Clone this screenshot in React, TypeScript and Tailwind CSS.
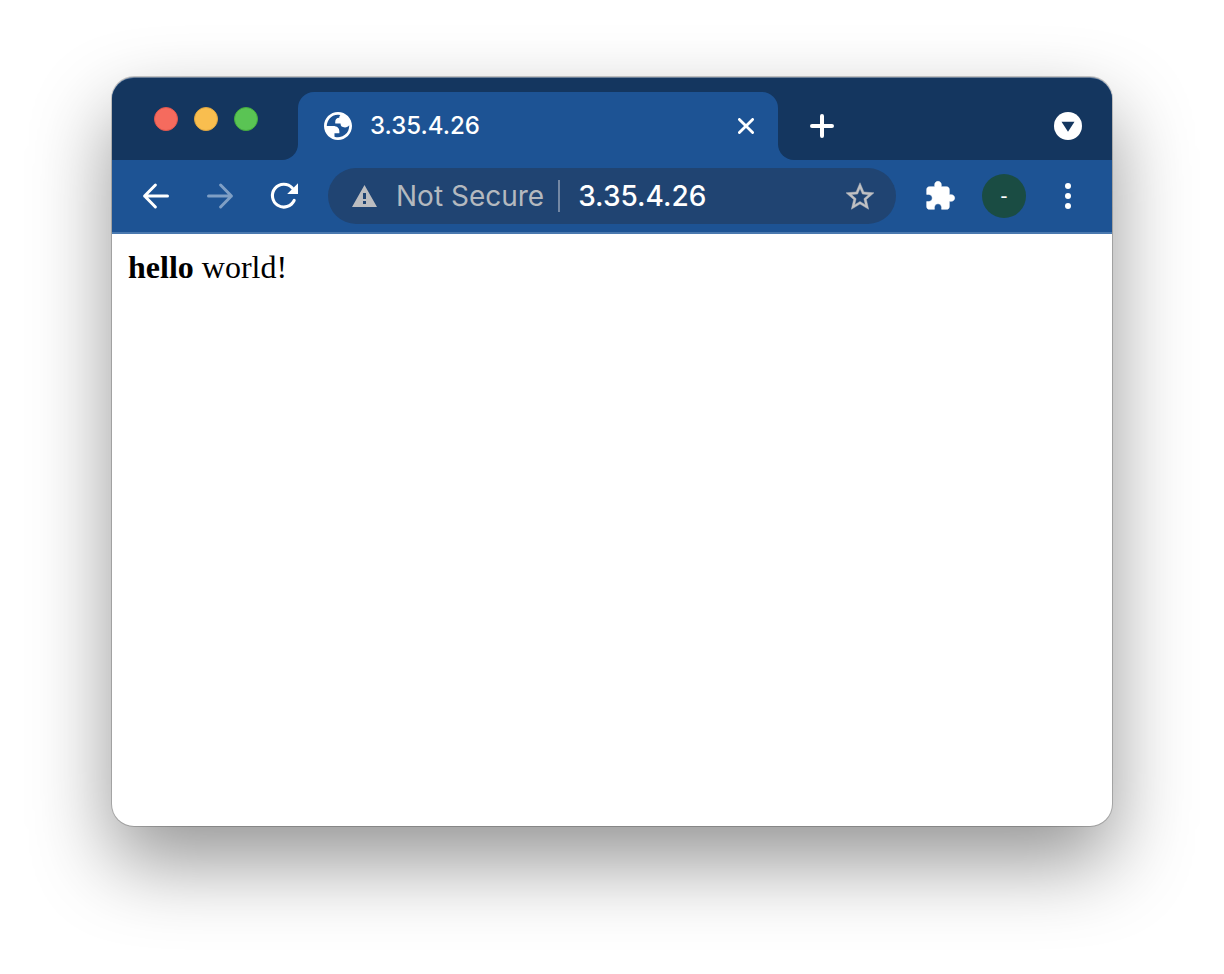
const iconButton = "flex h-14 w-16 shrink-0 items-center justify-center";

function GlobeIcon() {
  return (
    <svg viewBox="2 2 20 20" className="h-7 w-7 shrink-0" fill="#fff" aria-hidden="true">
      <path fillRule="evenodd" d="M12 2C6.480 2 2 6.480 2 12s4.480 10 10 10 10-4.480 10-10S17.520 2 12 2zM4 12h4.400c3.407.022 4.922 1.730 4.543 5.127H9.488v2.470a8.004 8.004 0 0 0 10.498-8.083C19.327 12.504 18.332 13 17 13c-2.137 0-3.206-.916-3.206-2.750h-3.748c-.274-2.728.683-4.092 2.870-4.092 0-.975.327-1.597.811-1.970A8.004 8.004 0 0 0 4 12z" />
    </svg>
  );
}

function TabStrip() {
  return (
    <div className="flex h-[82px] bg-[#1d5394]">
      <div className="flex w-[186px] shrink-0 items-center gap-4 rounded-br-2xl bg-[#14365f] pl-[42px]">
        <button aria-label="Close window" className="h-6 w-6 rounded-full border border-[#e2564c] bg-[#f56b5e]" />
        <button aria-label="Minimize window" className="h-6 w-6 rounded-full border border-[#e0a63f] bg-[#f9be4f]" />
        <button aria-label="Zoom window" className="h-6 w-6 rounded-full border border-[#45ac3e] bg-[#5ac454]" />
      </div>
      <div className="w-[480px] min-w-0 shrink bg-[#14365f] pt-[14px]">
        <div className="flex h-full items-center rounded-t-2xl bg-[#1d5394] pr-5 pl-[26px]">
          <GlobeIcon />
          <span className="ml-[18px] flex-1 truncate text-2xl font-medium text-white">3.35.4.26</span>
          <button aria-label="Close tab" className="flex h-6 w-6 items-center justify-center">
            <svg viewBox="0 0 16 16" className="h-4 w-4" fill="none" stroke="#fff" strokeWidth="2.8" strokeLinecap="round">
              <path d="M1.400 1.400l13.200 13.200M14.600 1.400L1.400 14.600" />
            </svg>
          </button>
        </div>
      </div>
      <div className="flex flex-1 items-center justify-between rounded-bl-2xl bg-[#14365f] pt-[14px] pr-[30px] pl-8">
        <button aria-label="New tab" className="flex h-6 w-6 items-center justify-center">
          <svg viewBox="0 0 24 24" className="h-6 w-6" fill="none" stroke="#fff" strokeWidth="4" strokeLinecap="round">
            <path d="M12 2v20M2 12h20" />
          </svg>
        </button>
        <button aria-label="Search tabs" className="h-7 w-7">
          <svg viewBox="0 0 28 28" className="h-7 w-7">
            <circle cx="14" cy="14" r="14" fill="#fff" />
            <path d="M7.500 9.800h13l-6.500 9.900z" fill="#14365f" />
          </svg>
        </button>
      </div>
    </div>
  );
}

function Toolbar() {
  return (
    <div className="flex h-[74px] items-center border-b-2 border-[#4a79af] bg-[#1d5394] px-3">
      <button aria-label="Back" className={iconButton}>
        <svg viewBox="0 0 28 28" className="h-7 w-7" fill="none" stroke="#fff" strokeWidth="3" strokeLinecap="round" strokeLinejoin="round">
          <path d="M25.500 14H2.600M13.400 3L2.600 14l10.800 11" />
        </svg>
      </button>
      <button aria-label="Forward" className={iconButton}>
        <svg viewBox="0 0 28 28" className="h-7 w-7" fill="none" stroke="#7f9fc5" strokeWidth="3" strokeLinecap="round" strokeLinejoin="round">
          <path d="M2.500 14h22.900M14.600 3l10.800 11-10.800 11" />
        </svg>
      </button>
      <button aria-label="Reload" className={iconButton}>
        <svg viewBox="0 0 28 28" className="h-7 w-7">
          <path d="M24.200 18.400A11.400 11.400 0 1 1 22.300 6" fill="none" stroke="#fff" strokeWidth="3.100" strokeLinecap="round" />
          <path d="M28 1.200V12H17.200z" fill="#fff" />
        </svg>
      </button>
      <div className="mx-3 flex h-14 min-w-0 flex-1 items-center rounded-full bg-[#204472] pr-[22px] pl-6 text-[28px]">
        <svg viewBox="0 0 25 22" className="h-[22px] w-[25px] shrink-0" aria-hidden="true">
          <path fillRule="evenodd" d="M12.500 0L25 22H0zM11 8v6h3V8zM11 16v3h3v-3z" fill="#bcbdc0" />
        </svg>
        <span className="ml-[19px] shrink-0 whitespace-nowrap text-[#b4b9bf]">Not Secure</span>
        <span className="mr-[18px] ml-[14px] h-8 w-0.5 shrink-0 bg-[#7488a4]" />
        <input aria-label="Address" defaultValue="3.35.4.26" className="min-w-0 flex-1 bg-transparent font-medium text-white outline-none" />
        <button aria-label="Bookmark this page" className="shrink-0">
          <svg viewBox="2 2 20 19" className="h-7 w-7 overflow-visible" fill="#c0c1c3" stroke="#c0c1c3" strokeWidth="0.3">
            <path d="M22 9.240l-7.190-.62L12 2 9.190 8.630 2 9.240l5.460 4.730L5.820 21 12 17.270 18.180 21l-1.630-7.030L22 9.240zM12 15.400l-3.760 2.270 1-4.280-3.320-2.880 4.380-.38L12 6.100l1.710 4.040 4.380.38-3.320 2.880 1 4.280L12 15.400z" />
          </svg>
        </button>
      </div>
      <button aria-label="Extensions" className={iconButton}>
        <svg viewBox="0 0 24 24" className="h-8 w-8" fill="#fff" stroke="#fff" strokeWidth="0.4" strokeLinejoin="round">
          <path d="M20.500 11H19V7c0-1.100-.9-2-2-2h-4V3.500C13 2.120 11.880 1 10.500 1S8 2.120 8 3.500V5H4c-1.100 0-1.990.9-1.990 2v3.800H3.500c1.490 0 2.700 1.210 2.700 2.700s-1.210 2.700-2.700 2.700H2V20c0 1.100.9 2 2 2h3.800v-1.500c0-1.490 1.210-2.700 2.700-2.700 1.490 0 2.700 1.210 2.700 2.700V22H17c1.100 0 2-.9 2-2v-4h1.500c1.380 0 2.500-1.120 2.500-2.500S21.880 11 20.500 11z" />
        </svg>
      </button>
      <button aria-label="Profile" className={iconButton}>
        <span className="flex h-11 w-11 items-center justify-center rounded-full bg-[#1a4c43] text-base font-semibold text-white">-</span>
      </button>
      <button aria-label="Menu" className={iconButton}>
        <svg viewBox="0 0 6 26" className="h-[26px] w-1.5" fill="#fff">
          <circle cx="3" cy="3" r="3" />
          <circle cx="3" cy="13" r="3" />
          <circle cx="3" cy="23" r="3" />
        </svg>
      </button>
    </div>
  );
}

export default function App() {
  return (
    <div className="flex min-h-screen flex-col bg-white px-28 pt-[77px] pb-[148px] font-[Inter,'Liberation_Sans',sans-serif]">
      <div className="flex flex-1 flex-col overflow-hidden rounded-[22px] border-t border-[#6b7f98] bg-white shadow-[0_36px_80px_rgba(0,0,0,0.42),0_0_0_1px_rgba(0,0,0,0.2)]">
        <TabStrip />
        <Toolbar />
        <main className="flex-1 px-4 py-4 font-['Liberation_Serif',serif] text-[32px] leading-[34px] text-black">
          <b>hello</b> world!
        </main>
      </div>
    </div>
  );
}
